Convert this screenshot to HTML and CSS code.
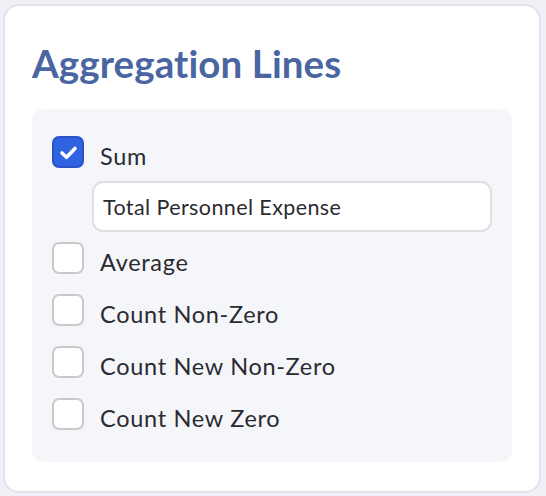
FILE: index.html
```html
<!DOCTYPE html>
<html lang="en">
<head>
  <meta charset="UTF-8" />
  <meta name="viewport" content="width=device-width, initial-scale=1.0" />
  <title>Aggregation Lines</title>
  <link rel="stylesheet" href="styles.css">
</head>
<body>
  <section class="card">
    <h2 class="card-title">Aggregation Lines</h2>

    <div class="options">
      <label class="option checked">
        <span class="box">
          <svg viewBox="0 0 32 32" width="32" height="32">
            <path d="M10 17 L14.5 21.3 L23 12.5" fill="none" stroke="#fff" stroke-width="3.6" stroke-linecap="round" stroke-linejoin="round"/>
          </svg>
        </span>
        <span class="option-label">Sum</span>
      </label>
      <div class="name-field">Total Personnel Expense</div>

      <label class="option">
        <span class="box"></span>
        <span class="option-label">Average</span>
      </label>
      <label class="option">
        <span class="box"></span>
        <span class="option-label">Count Non-Zero</span>
      </label>
      <label class="option">
        <span class="box"></span>
        <span class="option-label">Count New Non-Zero</span>
      </label>
      <label class="option">
        <span class="box"></span>
        <span class="option-label">Count New Zero</span>
      </label>
    </div>
  </section>
</body>
</html>
```

FILE: styles.css
```css
html, body {
  margin: 0;
  padding: 0;
  background: #f0f1f7;
  font-family: 'Lato', 'Noto Sans', sans-serif;
  color: #2a2b30;
}

body {
  padding: 4px 5px 5px 3px;
}

.card {
  background: #fff;
  border: 2px solid #e1e2ec;
  border-radius: 16px;
  padding: 35px 27px 28px 27px;
  height: 422px;
}

.card-title {
  margin: 0 0 24px 0;
  font-size: 38.5px;
  font-weight: 700;
  line-height: 44px;
  color: #4a66a2;
  letter-spacing: 0.1px;
}

.options {
  background: #f5f6fa;
  border-radius: 12px;
  padding: 27px 20px 32px 20px;
  display: flex;
  flex-direction: column;
  gap: 20px;
}

.option {
  display: flex;
  align-items: center;
  gap: 16px;
  height: 32px;
}

.box {
  width: 32px;
  height: 32px;
  box-sizing: border-box;
  border: 2px solid #c9c9cd;
  border-radius: 7px;
  background: #fff;
  flex-shrink: 0;
  position: relative;
}

.option.checked .box {
  background: #2f63e2;
  border-color: #2853c6;
}

.box svg {
  position: absolute;
  top: -2px;
  left: -2px;
}

.option-label {
  font-size: 23.5px;
  letter-spacing: 0.7px;
  margin-top: 7px;
}

.name-field {
  margin: -7px 0 -10px 40px;
  height: 51px;
  box-sizing: border-box;
  border: 2px solid #dfe0e6;
  border-radius: 11px;
  background: #fff;
  padding: 0 9px;
  display: flex;
  align-items: center;
  font-size: 21.5px;
  letter-spacing: 0.4px;
}
```
